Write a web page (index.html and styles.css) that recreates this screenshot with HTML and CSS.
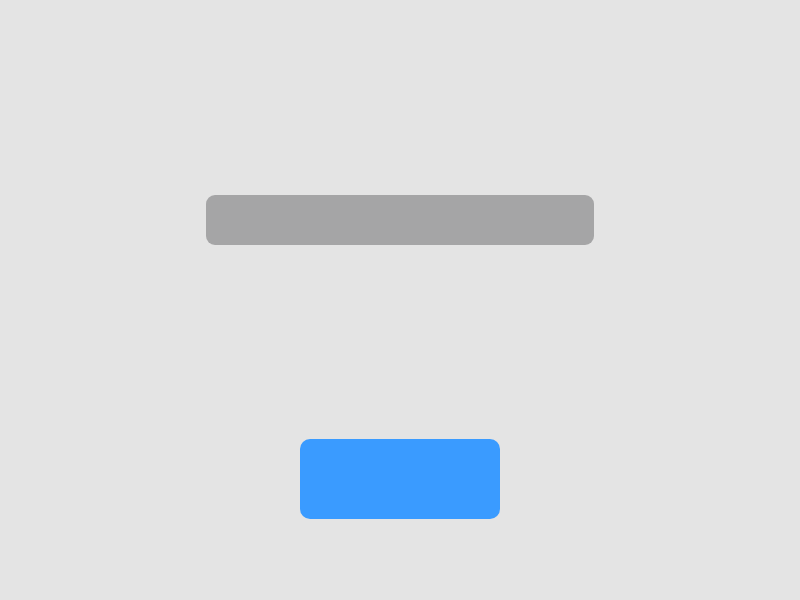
FILE: index.html
```html
<!DOCTYPE html>
<html>
<head>
<meta charset="utf-8">
<link rel="stylesheet" href="styles.css">
</head>
<body>
<main class="screen">
  <div class="field"></div>
  <button class="action" type="button"></button>
</main>
</body>
</html>
```

FILE: styles.css
```css
html, body {
  margin: 0;
  padding: 0;
  width: 800px;
  height: 600px;
  background: #e4e4e4;
  font-family: "Liberation Sans", Arial, sans-serif;
  overflow: hidden;
}
.screen {
  display: flex;
  flex-direction: column;
  align-items: center;
  padding-top: 195px;
  gap: 194px;
}
.field {
  width: 388px;
  height: 50px;
  border-radius: 9px;
  background: #a5a5a6;
}
.action {
  width: 200px;
  height: 80px;
  border: none;
  padding: 0;
  border-radius: 10px;
  background: #3a9bff;
}
```
